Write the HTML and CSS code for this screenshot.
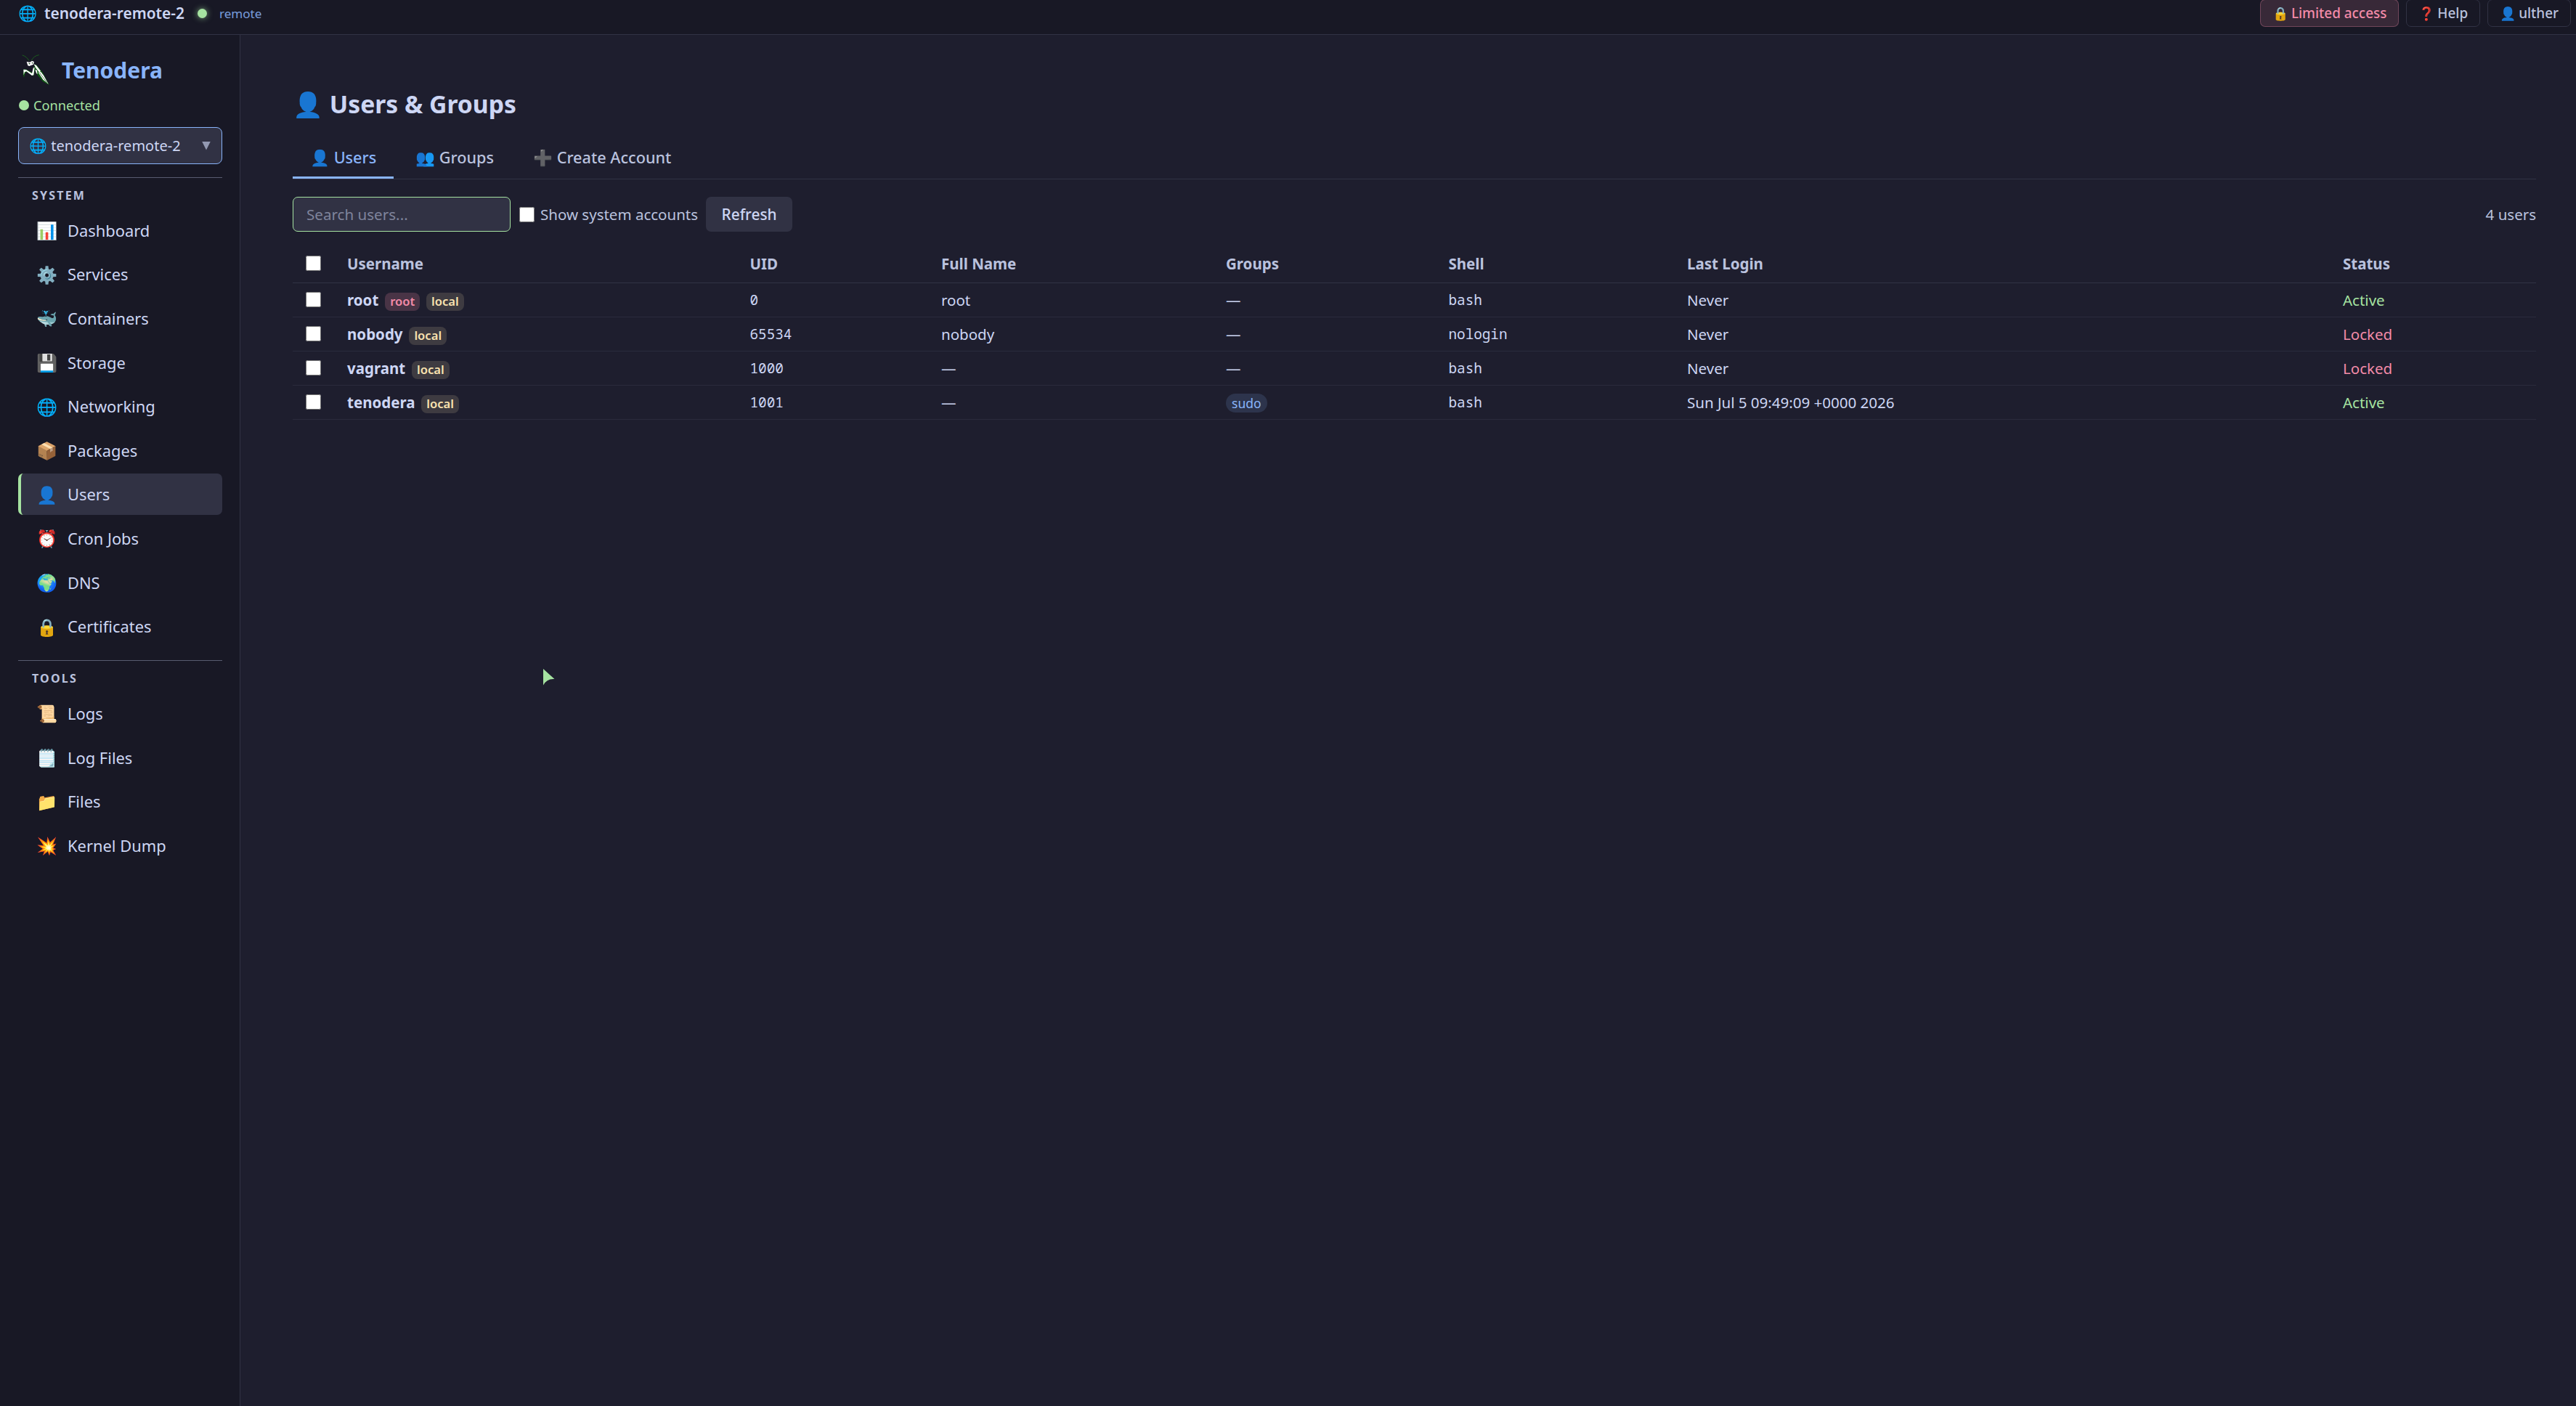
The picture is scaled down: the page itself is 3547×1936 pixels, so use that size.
FILE: index.html
```html
<!DOCTYPE html>
<html lang="en">
<head>
    <meta charset="UTF-8">
    <meta name="viewport" content="width=device-width, initial-scale=1.0">
    <title>Tenodera</title>
    <link rel="stylesheet" href="styles.css">
</head>
<body>
    <header class="topbar">
        <div class="host">
            <span class="host-icon">🌐</span>
            <span class="host-name">tenodera-remote-2</span>
            <span class="host-dot"></span>
            <span class="host-type">remote</span>
        </div>
        <div class="top-actions">
            <button class="top-btn limited"><span class="btn-icon">🔒</span>Limited access</button>
            <button class="top-btn"><span class="btn-icon">❓</span>Help</button>
            <button class="top-btn"><span class="btn-icon">👤</span>ulther</button>
        </div>
    </header>

    <div class="layout">
        <aside class="sidebar">
            <div class="brand">
                <svg class="logo" viewBox="90 224 114 126">
                    <g fill="none" stroke="#1d6b1d" stroke-width="2.5">
                        <path d="M92 227Q110 232 120 250"/>
                        <path d="M161 226Q140 229 129 250"/>
                    </g>
                    <path fill="#0f5a12" d="M140 264L152 268L176 298L203 350L176 335L150 302Z"/>
                    <path fill="#0f5a12" d="M98 284L110 286L134 300L140 272L146 282L138 313L112 296L104 300L99 320L95 306Z"/>
                    <path fill="#fff" d="M110 254L123 256L132 251L141 254L138 265L121 272L115 270Z"/>
                    <path fill="#123f16" d="M117 259L125 260L122 265ZM131 257L137 257L133 263Z"/>
                    <path fill="#fff" d="M140 264L150 269L168 292L163 299L147 279Z"/>
                    <path fill="#fff" d="M158 298L169 296L180 310L200 346L178 328Z"/>
                    <path fill="none" stroke="#123f16" stroke-width="2" d="M163 299L194 340"/>
                    <path fill="#fff" d="M97 286L108 287L132 302L137 280L143 277L139 309L132 311L109 294L102 297L98 309Z"/>
                    <path fill="#fff" d="M145 286L153 290L155 305L150 301Z"/>
                </svg>
                <span class="brand-name">Tenodera</span>
            </div>
            <div class="status"><span class="status-dot"></span>Connected</div>
            <div class="host-select"><span>🌐 tenodera-remote-2</span><span class="arrow"></span></div>

            <div class="nav-section">
                <div class="nav-label">SYSTEM</div>
                <a class="nav-item"><span class="icon">📊</span>Dashboard</a>
                <a class="nav-item"><span class="icon">⚙️</span>Services</a>
                <a class="nav-item"><span class="icon">🐳</span>Containers</a>
                <a class="nav-item"><span class="icon">💾</span>Storage</a>
                <a class="nav-item"><span class="icon">🌐</span>Networking</a>
                <a class="nav-item"><span class="icon">📦</span>Packages</a>
                <a class="nav-item active"><span class="icon">👤</span>Users</a>
                <a class="nav-item"><span class="icon">⏰</span>Cron Jobs</a>
                <a class="nav-item"><span class="icon">🌍</span>DNS</a>
                <a class="nav-item"><span class="icon">🔒</span>Certificates</a>
            </div>

            <div class="nav-section">
                <div class="nav-label">TOOLS</div>
                <a class="nav-item"><span class="icon">📜</span>Logs</a>
                <a class="nav-item"><span class="icon">🗒️</span>Log Files</a>
                <a class="nav-item"><span class="icon">📁</span>Files</a>
                <a class="nav-item"><span class="icon">💥</span>Kernel Dump</a>
            </div>
        </aside>

        <main class="content">
            <h1>👤 Users &amp; Groups</h1>
            <div class="tabs">
                <button class="tab active">👤 Users</button>
                <button class="tab">👥 Groups</button>
                <button class="tab">➕ Create Account</button>
            </div>
            <div class="toolbar">
                <input type="text" class="search" placeholder="Search users...">
                <label class="check"><input type="checkbox">Show system accounts</label>
                <button class="refresh">Refresh</button>
                <span class="count">4 users</span>
            </div>
            <table>
                <colgroup>
                    <col class="c-check"><col class="c-name"><col class="c-uid"><col class="c-full">
                    <col class="c-groups"><col class="c-shell"><col class="c-login"><col class="c-status">
                </colgroup>
                <thead>
                    <tr>
                        <th><input type="checkbox"></th>
                        <th>Username</th>
                        <th>UID</th>
                        <th>Full Name</th>
                        <th>Groups</th>
                        <th>Shell</th>
                        <th>Last Login</th>
                        <th>Status</th>
                    </tr>
                </thead>
                <tbody>
                    <tr>
                        <td><input type="checkbox"></td>
                        <td><b>root</b> <span class="badge root">root</span> <span class="badge">local</span></td>
                        <td class="mono">0</td>
                        <td>root</td>
                        <td>—</td>
                        <td class="mono">bash</td>
                        <td>Never</td>
                        <td class="ok">Active</td>
                    </tr>
                    <tr>
                        <td><input type="checkbox"></td>
                        <td><b>nobody</b> <span class="badge">local</span></td>
                        <td class="mono">65534</td>
                        <td>nobody</td>
                        <td>—</td>
                        <td class="mono">nologin</td>
                        <td>Never</td>
                        <td class="locked">Locked</td>
                    </tr>
                    <tr>
                        <td><input type="checkbox"></td>
                        <td><b>vagrant</b> <span class="badge">local</span></td>
                        <td class="mono">1000</td>
                        <td>—</td>
                        <td>—</td>
                        <td class="mono">bash</td>
                        <td>Never</td>
                        <td class="locked">Locked</td>
                    </tr>
                    <tr>
                        <td><input type="checkbox"></td>
                        <td><b>tenodera</b> <span class="badge">local</span></td>
                        <td class="mono">1001</td>
                        <td>—</td>
                        <td><span class="pill">sudo</span></td>
                        <td class="mono">bash</td>
                        <td>Sun Jul 5 09:49:09 +0000 2026</td>
                        <td class="ok">Active</td>
                    </tr>
                </tbody>
            </table>
        </main>
    </div>

    <svg class="cursor" viewBox="0 0 16 23"><path d="M0 0L15.5 14Q5 13 0 22.5Z"/></svg>
</body>
</html>
```
FILE: styles.css
```css
* {
    box-sizing: border-box;
}
body {
    margin: 0;
    height: 1936px;
    display: flex;
    flex-direction: column;
    overflow: hidden;
    font-family: "Noto Sans", sans-serif;
    font-size: 20.5px;
    background: #1e1e2e;
    color: #cdd6f4;
}
button, input {
    font-family: inherit;
    margin: 0;
}

/* top bar */
.topbar {
    height: 48px;
    flex-shrink: 0;
    display: flex;
    align-items: center;
    justify-content: space-between;
    padding: 0 7px 11px 25px;
    background: #181825;
    border-bottom: 1px solid #313244;
}
.host {
    display: flex;
    align-items: center;
}
.host-icon {
    width: 27px;
    margin-right: 9px;
    font-size: 21px;
}
.host-name {
    font-size: 20.9px;
    font-weight: 600;
}
.host-dot {
    width: 13px;
    height: 13px;
    margin: 0 17px 0 18px;
    border-radius: 50%;
    background: #a6e3a1;
    box-shadow: 0 0 8px rgba(166, 227, 161, 0.7);
}
.host-type {
    font-size: 17.1px;
    color: #89b4fa;
    opacity: 0.85;
}
.top-actions {
    display: flex;
    gap: 10px;
}
.top-btn {
    display: flex;
    align-items: center;
    gap: 4px;
    height: 38px;
    padding: 0 16px;
    border: 1px solid #313244;
    border-radius: 7px;
    background: none;
    color: #bac2de;
    font-size: 18.9px;
    font-weight: 500;
}
.btn-icon {
    font-size: 18px;
}
.top-btn.limited {
    background: rgba(243, 139, 168, 0.15);
    border-color: rgba(243, 139, 168, 0.3);
    color: #f38ba8;
}

.layout {
    flex: 1;
    display: flex;
}

/* sidebar */
.sidebar {
    width: 331px;
    flex-shrink: 0;
    padding: 24px 24px 0 25px;
    background: #181825;
    border-right: 1px solid #313244;
}
.brand {
    height: 47px;
    display: flex;
    align-items: center;
}
.logo {
    width: 38px;
    height: 42px;
    margin: 1px 17px 0 5px;
}
.brand-name {
    margin-top: 2px;
    font-size: 30px;
    font-weight: 700;
    color: #89b4fa;
}
.status {
    display: flex;
    align-items: center;
    height: 24px;
    margin-top: 14px;
    font-size: 18.2px;
    color: #a6e3a1;
}
.status-dot {
    width: 14px;
    height: 14px;
    margin: 0 6px 0 1px;
    border-radius: 50%;
    background: #a6e3a1;
}
.host-select {
    display: flex;
    align-items: center;
    justify-content: space-between;
    height: 51px;
    margin-top: 18px;
    padding: 0 15px 0 14px;
    border: 1px solid #89b4fa;
    border-radius: 8px;
    background: #313244;
    font-size: 20px;
}
.arrow {
    width: 12px;
    height: 12px;
    background: #9399b2;
    clip-path: polygon(0 0, 100% 0, 50% 100%);
}
.nav-section {
    display: flex;
    flex-direction: column;
    gap: 3.6px;
    margin-top: 18px;
    padding-top: 12px;
    border-top: 1px solid #585b70;
}
.nav-label {
    height: 24px;
    margin-bottom: 4.2px;
    padding-left: 19px;
    line-height: 24px;
    font-size: 16px;
    font-weight: 700;
    letter-spacing: 2.2px;
    color: #bac2de;
}
.nav-item {
    display: flex;
    align-items: center;
    gap: 15px;
    height: 57px;
    padding-left: 21px;
    border-left: 4px solid transparent;
    border-radius: 7px;
    font-size: 21.9px;
}
.nav-item.active {
    background: #313244;
    border-left-color: #a6e3a1;
}
.icon {
    width: 28px;
    display: flex;
    justify-content: center;
    font-size: 23.4px;
}

/* users page */
.content {
    flex: 1;
    padding: 73px 55px 0 72px;
}
h1 {
    margin: 0;
    font-size: 33.7px;
    line-height: 45px;
}
.tabs {
    display: flex;
    gap: 6px;
    margin-top: 23px;
    border-bottom: 1px solid #313244;
}
.tab {
    padding: 12px 24px;
    height: 57px;
    border: none;
    border-bottom: 3px solid transparent;
    background: none;
    color: #bac2de;
    font-size: 21.65px;
    font-weight: 500;
}
.tab.active {
    color: #89b4fa;
    border-bottom-color: #89b4fa;
}
.toolbar {
    display: flex;
    align-items: center;
    gap: 12px;
    height: 48px;
    margin-top: 24px;
    color: #bac2de;
}
.search {
    width: 300px;
    height: 48px;
    padding: 0 18px;
    border: 1px solid #a6e3a1;
    border-radius: 7px;
    background: #313244;
    font-size: 20.6px;
}
.search::placeholder {
    color: #7f849c;
}
input[type="checkbox"] {
    display: block;
    width: 21px;
    height: 21px;
}
.check {
    display: flex;
    align-items: center;
    gap: 8px;
    margin-right: -1px;
}
.refresh {
    height: 48px;
    padding: 0 21.5px;
    border: none;
    border-radius: 7px;
    background: #313244;
    color: #cdd6f4;
    font-size: 20.8px;
    font-weight: 500;
}
.count {
    margin-left: auto;
}

table {
    width: 3089px;
    margin-top: 18px;
    table-layout: fixed;
    border-collapse: separate;
    border-spacing: 0;
}
.c-check { width: 57px; }
.c-name { width: 554.5px; }
.c-uid { width: 263.5px; }
.c-full { width: 392px; }
.c-groups { width: 306.5px; }
.c-shell { width: 328.5px; }
.c-login { width: 903px; }
.c-status { width: 284px; }
th, td {
    height: 47px;
    padding: 0 18px;
    text-align: left;
    line-height: 28px;
    white-space: nowrap;
    border-bottom: 1px solid #2a2b3c;
}
th {
    height: 53px;
    color: #bac2de;
    border-bottom-color: #313244;
}
th input[type="checkbox"], td input[type="checkbox"] {
    margin-bottom: 1px;
}
.mono {
    font-family: "Noto Sans Mono", monospace;
    font-size: 19.3px;
}
.badge {
    display: inline-block;
    margin-left: 3.5px;
    padding: 0 7px 2px;
    border-radius: 8px;
    background: rgba(249, 226, 175, 0.15);
    color: #f9e2af;
    font-size: 16.6px;
    font-weight: 600;
    line-height: 23px;
}
.badge.root {
    background: rgba(243, 139, 168, 0.2);
    color: #f38ba8;
}
.pill {
    display: inline-block;
    padding: 0 8px;
    border-radius: 13px;
    background: rgba(137, 180, 250, 0.15);
    color: #89b4fa;
    font-size: 17.5px;
    line-height: 26px;
}
.ok {
    color: #a6e3a1;
}
.locked {
    color: #f38ba8;
}

.cursor {
    position: absolute;
    left: 748px;
    top: 921px;
    width: 16px;
    height: 23px;
    fill: #a6e3a1;
}
```
